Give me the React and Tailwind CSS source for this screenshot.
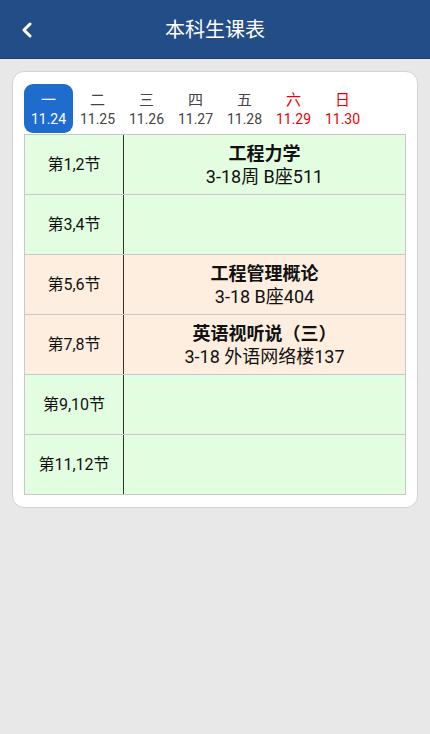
import React from "react";

const days = [
  { d: "一", n: "11.24", sel: true },
  { d: "二", n: "11.25" },
  { d: "三", n: "11.26" },
  { d: "四", n: "11.27" },
  { d: "五", n: "11.28" },
  { d: "六", n: "11.29", red: true },
  { d: "日", n: "11.30", red: true },
];

const rows = [
  { label: "第1,2节", bg: "bg-[#e3fde0]", name: "工程力学", room: "3-18周 B座511" },
  { label: "第3,4节", bg: "bg-[#e3fde0]" },
  { label: "第5,6节", bg: "bg-[#fdeedf]", name: "工程管理概论", room: "3-18 B座404" },
  { label: "第7,8节", bg: "bg-[#fdeedf]", name: "英语视听说（三）", room: "3-18 外语网络楼137" },
  { label: "第9,10节", bg: "bg-[#e3fde0]" },
  { label: "第11,12节", bg: "bg-[#e3fde0]" },
];

export default function App() {
  return (
    <div
      className="w-[430px] h-[734px] bg-[#e8e8e8] flex flex-col"
      style={{ fontFamily: 'Roboto, "Noto Sans CJK SC", sans-serif' }}
    >
      <div className="h-[59px] bg-[#224d87] border-b border-[#173d70] flex items-center relative shrink-0">
        <div className="absolute left-[20px] top-[22px]">
          <svg width="14" height="16" viewBox="0 0 14 16">
            <path d="M10 2 L4 8 L10 14" fill="none" stroke="white" strokeWidth="3" strokeLinecap="round" strokeLinejoin="round" />
          </svg>
        </div>
        <div className="flex-1 text-center text-white text-[20px] leading-none pt-[1px]">本科生课表</div>
      </div>
      <div className="px-[12px] pt-[12px]">
        <div className="bg-white rounded-[12px] border border-[#d2d2d2] px-[11px] pt-[12px] pb-[12px]">
          <div className="flex h-[49px] mb-[1px]">
            {days.map((x) => (
              <div
                key={x.n}
                className={
                  "w-[49px] h-[49px] flex flex-col items-center justify-center rounded-[9px] " +
                  (x.sel ? "bg-[#1e6dce] text-white" : x.red ? "text-[#ee0000]" : "text-[#444444]")
                }
              >
                <div className="text-[15px] leading-[20px]">{x.d}</div>
                <div className="text-[14px] leading-[18px]">{x.n}</div>
              </div>
            ))}
          </div>
          <div className="border-l border-r border-b border-[#c8c8c8]">
            {rows.map((r, i) => (
              <div key={i} className={"flex h-[60px] border-t border-[#c8c8c8] " + r.bg}>
                <div className="w-[99px] border-r border-[#333333] flex items-center justify-center text-[16px] text-[#111111]">
                  {r.label}
                </div>
                <div className="flex-1 flex flex-col items-center justify-center text-[#111111]">
                  {r.name && <div className="text-[18px] font-bold leading-[23px]">{r.name}</div>}
                  {r.room && <div className="text-[18px] leading-[23px]">{r.room}</div>}
                </div>
              </div>
            ))}
          </div>
        </div>
      </div>
    </div>
  );
}
